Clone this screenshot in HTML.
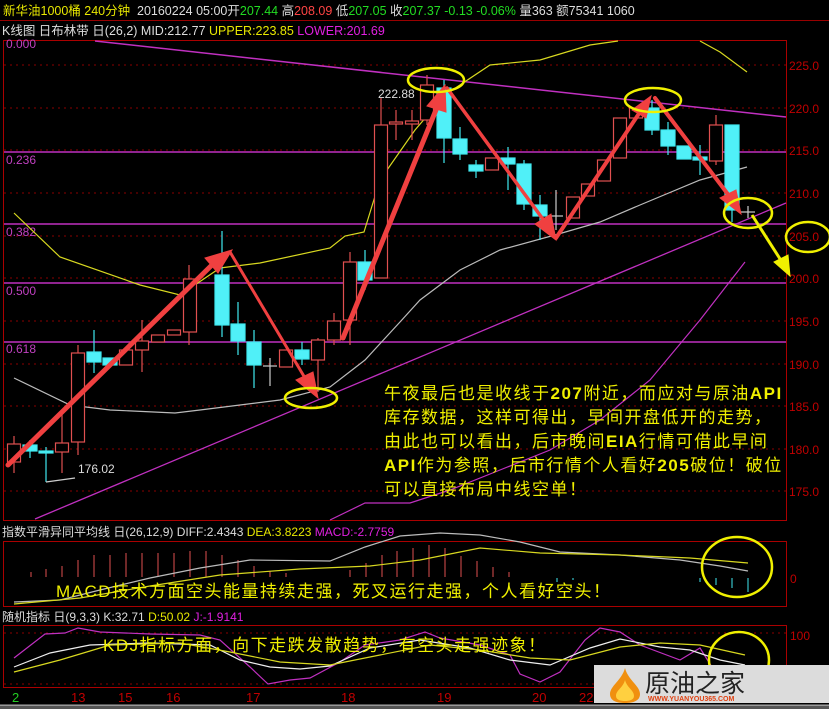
<!DOCTYPE html>
<html><head><meta charset="utf-8"><style>
html,body{margin:0;padding:0;background:#000;width:829px;height:709px;overflow:hidden}
svg{display:block}
text{font-family:"Liberation Sans","Noto Sans CJK SC",sans-serif}
</style></head><body>
<svg width="829" height="709" viewBox="0 0 829 709" xmlns="http://www.w3.org/2000/svg">
<rect width="829" height="709" fill="#000"/>
<!-- header -->
<text x="3" y="15" font-size="12.5" fill="#e8e800">新华油1000桶 240分钟</text>
<text x="137" y="15" font-size="12.5" fill="#ddd">20160224 05:00开<tspan fill="#22dd22">207.44</tspan> 高<tspan fill="#ff4444">208.09</tspan> 低<tspan fill="#22dd22">207.05</tspan> 收<tspan fill="#22dd22">207.37</tspan> <tspan fill="#22dd22">-0.13</tspan> <tspan fill="#22dd22">-0.06%</tspan> 量363 额75341 1060</text>
<line x1="0" y1="20.5" x2="829" y2="20.5" stroke="#900"/>
<text x="2" y="35" font-size="12.5" fill="#ddd">K线图 日布林带 日(26,2) MID:212.77 <tspan fill="#e8e800">UPPER:223.85</tspan> <tspan fill="#e020e0">LOWER:201.69</tspan></text>
<!-- main frame -->
<rect x="3.5" y="40.5" width="783" height="480" fill="none" stroke="#a00"/>
<g stroke="#8a0000" stroke-dasharray="2,4">
<line x1="4" y1="65" x2="786" y2="65"/><line x1="4" y1="108" x2="786" y2="108"/><line x1="4" y1="150" x2="786" y2="150"/><line x1="4" y1="193" x2="786" y2="193"/><line x1="4" y1="236" x2="786" y2="236"/><line x1="4" y1="278" x2="786" y2="278"/><line x1="4" y1="321" x2="786" y2="321"/><line x1="4" y1="364" x2="786" y2="364"/><line x1="4" y1="406" x2="786" y2="406"/><line x1="4" y1="449" x2="786" y2="449"/><line x1="4" y1="491" x2="786" y2="491"/>
</g>
<g stroke="#c030c0" stroke-width="1.5">
<line x1="4" y1="152" x2="786" y2="152"/><line x1="4" y1="224" x2="786" y2="224"/><line x1="4" y1="283" x2="786" y2="283"/><line x1="4" y1="342" x2="786" y2="342"/>
</g>
<g font-size="12" fill="#c040c0"><text x="6" y="48">0.000</text><text x="6" y="164">0.236</text><text x="6" y="236">0.382</text><text x="6" y="295">0.500</text><text x="6" y="353">0.618</text></g>
<g font-size="12" fill="#c00000"><text x="789" y="70">225.0</text><text x="789" y="113">220.0</text><text x="789" y="155">215.0</text><text x="789" y="198">210.0</text><text x="789" y="241">205.0</text><text x="789" y="283">200.0</text><text x="789" y="326">195.0</text><text x="789" y="369">190.0</text><text x="789" y="411">185.0</text><text x="789" y="454">180.0</text><text x="789" y="496">175.0</text></g>
<!-- trend lines -->
<line x1="95" y1="41" x2="786" y2="117" stroke="#c030c0" stroke-width="1.5"/>
<line x1="35" y1="519" x2="786" y2="203" stroke="#c030c0" stroke-width="1.3"/>
<polyline fill="none" stroke="#c030c0" stroke-width="1.2" points="330,520 365,503 410,503 450,490 500,470 550,450 600,420 650,380 700,320 745,262"/>
<polyline fill="none" stroke="#d8d820" stroke-width="1.2" points="14,213 60,257 140,285 180,295 220,268 260,263 330,248 345,236 364,232 380,180 415,130 445,95 490,65 540,60 590,45 618,41"/>
<polyline fill="none" stroke="#d8d820" stroke-width="1.2" points="700,41 720,52 747,72"/>
<polyline fill="none" stroke="#bbb" stroke-width="1.2" points="14,378 70,405 110,410 175,413 200,410 280,400 330,387 365,360 400,322 420,300 460,270 500,250 555,235 600,222 640,205 700,180 747,167"/>
<!-- candles -->
<g stroke="#e05050" fill="#000" stroke-width="1.2">
<line x1="14" y1="436" x2="14" y2="473"/><rect x="7.5" y="444" width="13" height="18"/>
<line x1="62" y1="415" x2="62" y2="473"/><rect x="55.5" y="443" width="13" height="9"/>
<line x1="78" y1="345" x2="78" y2="455"/><rect x="71.5" y="353" width="13" height="89"/>
<rect x="119.5" y="350" width="13" height="15"/>
<line x1="142" y1="320" x2="142" y2="372"/><rect x="135.5" y="341" width="13" height="9"/>
<rect x="151.5" y="335" width="13" height="7"/>
<rect x="167.5" y="330" width="13" height="5"/>
<line x1="189" y1="265" x2="189" y2="345"/><rect x="183.5" y="279" width="13" height="53"/>
<rect x="279.5" y="350" width="13" height="17"/>
<line x1="318" y1="338" x2="318" y2="392"/><rect x="311.5" y="340" width="13" height="20"/>
<line x1="334" y1="313" x2="334" y2="345"/><rect x="327.5" y="321" width="13" height="19"/>
<line x1="350" y1="252" x2="350" y2="345"/><rect x="343.5" y="262" width="13" height="58"/>
<line x1="381" y1="98" x2="381" y2="278"/><rect x="374.5" y="125" width="13" height="153"/>
<line x1="396" y1="110" x2="396" y2="140"/><rect x="389.5" y="122" width="13" height="2"/>
<line x1="412" y1="110" x2="412" y2="140"/><rect x="405.5" y="121" width="13" height="3"/>
<line x1="427" y1="75" x2="427" y2="125"/><rect x="420.5" y="85" width="13" height="35"/>
<rect x="485.5" y="158" width="13" height="12"/>
<rect x="566.5" y="197" width="13" height="21"/>
<rect x="581.5" y="184" width="13" height="12"/>
<rect x="597.5" y="160" width="13" height="21"/>
<rect x="613.5" y="118" width="13" height="40"/>
<rect x="629.5" y="108" width="13" height="10"/>
<line x1="716" y1="115" x2="716" y2="165"/><rect x="709.5" y="125" width="13" height="36"/>
</g>
<g stroke="#40e8f0" fill="#50f0f8" stroke-width="1.2">
<line x1="30" y1="440" x2="30" y2="458"/><rect x="23" y="445" width="14" height="6"/>
<line x1="46" y1="447" x2="46" y2="482"/><rect x="39" y="451" width="14" height="2"/>
<line x1="94" y1="330" x2="94" y2="373"/><rect x="87" y="352" width="14" height="10"/>
<rect x="103" y="358" width="14" height="7"/>
<line x1="222" y1="231" x2="222" y2="337"/><rect x="215" y="275" width="14" height="50"/>
<line x1="238" y1="302" x2="238" y2="355"/><rect x="231" y="324" width="14" height="17"/>
<line x1="254" y1="330" x2="254" y2="388"/><rect x="247" y="342" width="14" height="23"/>
<line x1="302" y1="342" x2="302" y2="365"/><rect x="295" y="350" width="14" height="9"/>
<line x1="365" y1="250" x2="365" y2="290"/><rect x="358" y="262" width="14" height="18"/>
<line x1="444" y1="80" x2="444" y2="163"/><rect x="437" y="88" width="14" height="50"/>
<line x1="460" y1="127" x2="460" y2="160"/><rect x="453" y="139" width="14" height="15"/>
<line x1="476" y1="160" x2="476" y2="178"/><rect x="469" y="165" width="14" height="6"/>
<line x1="508" y1="147" x2="508" y2="190"/><rect x="501" y="158" width="14" height="6"/>
<line x1="524" y1="160" x2="524" y2="210"/><rect x="517" y="164" width="14" height="40"/>
<line x1="540" y1="195" x2="540" y2="240"/><rect x="533" y="205" width="14" height="11"/>
<line x1="652" y1="100" x2="652" y2="135"/><rect x="645" y="108" width="14" height="22"/>
<line x1="668" y1="122" x2="668" y2="155"/><rect x="661" y="130" width="14" height="16"/>
<rect x="677" y="146" width="14" height="13"/>
<line x1="700" y1="145" x2="700" y2="175"/><rect x="693" y="157" width="14" height="3"/>
<line x1="732" y1="125" x2="732" y2="222"/><rect x="725" y="125" width="14" height="85"/>
</g>
<g stroke="#ccc" stroke-width="1.2">
<line x1="263" y1="366" x2="277" y2="366"/><line x1="270" y1="358" x2="270" y2="386"/>
<line x1="549" y1="216" x2="563" y2="216"/><line x1="556" y1="190" x2="556" y2="230"/>
<line x1="741" y1="212" x2="755" y2="212"/><line x1="748" y1="206" x2="748" y2="218"/>
<polyline fill="none" points="46,482 75,478"/>
</g>
<text x="78" y="473" font-size="12" fill="#ddd">176.02</text>
<text x="378" y="98" font-size="12" fill="#ddd">222.88</text>
<!-- arrows -->
<g stroke="#f04040" fill="#f04040" stroke-linecap="round">
<line x1="8" y1="465" x2="215" y2="262" stroke-width="5"/><polygon points="232,250 205,258 218,273"/>
<line x1="230" y1="252" x2="305" y2="378" stroke-width="3"/><polygon points="318,398 296,380 313,372"/>
<line x1="343" y1="338" x2="438" y2="105" stroke-width="5"/><polygon points="445,85 427,106 446,112"/>
<line x1="447" y1="88" x2="545" y2="222" stroke-width="3.5"/><polygon points="556,240 535,224 551,214"/>
<line x1="556" y1="238" x2="640" y2="112" stroke-width="4"/><polygon points="651,96 632,110 646,118"/>
<line x1="655" y1="98" x2="730" y2="197" stroke-width="4"/><polygon points="741,214 720,198 736,190"/>
</g>
<g stroke="#f0f000" fill="#f0f000">
<line x1="752" y1="215" x2="782" y2="262" stroke-width="3"/><polygon points="790,276 774,262 788,255"/>
</g>
<g fill="none" stroke="#f0f000" stroke-width="2.5">
<ellipse cx="436" cy="80" rx="28" ry="12"/><ellipse cx="311" cy="398" rx="26" ry="10"/><ellipse cx="653" cy="100" rx="28" ry="12"/><ellipse cx="748" cy="213" rx="24" ry="15"/><ellipse cx="808" cy="237" rx="22" ry="15"/>
</g>
<g font-size="17" fill="#f0f000" letter-spacing="1.5">
<text x="384" y="399">午夜最后也是收线于<tspan font-weight="bold">207</tspan>附近，而应对与原油<tspan font-weight="bold">API</tspan></text>
<text x="384" y="423">库存数据，这样可得出，早间开盘低开的走势，</text>
<text x="384" y="447">由此也可以看出，后市晚间<tspan font-weight="bold">EIA</tspan>行情可借此早间</text>
<text x="384" y="471"><tspan font-weight="bold">API</tspan>作为参照，后市行情个人看好<tspan font-weight="bold">205</tspan>破位！破位</text>
<text x="384" y="495">可以直接布局中线空单！</text>
</g>
<!-- MACD -->
<text x="2" y="536" font-size="12" fill="#ddd">指数平滑异同平均线 日(26,12,9) DIFF:2.4343 <tspan fill="#e8e800">DEA:3.8223</tspan> <tspan fill="#e020e0">MACD:-2.7759</tspan></text>
<rect x="3.5" y="541.5" width="783" height="65" fill="none" stroke="#a00"/>
<text x="790" y="583" font-size="12" fill="#c00000">0</text>
<g stroke="#e05050" stroke-width="1">
<line x1="31" y1="577" x2="31" y2="572"/><line x1="46" y1="577" x2="46" y2="569"/><line x1="62" y1="577" x2="62" y2="566"/><line x1="78" y1="577" x2="78" y2="560"/><line x1="94" y1="577" x2="94" y2="555"/><line x1="110" y1="577" x2="110" y2="555"/><line x1="126" y1="577" x2="126" y2="553"/><line x1="142" y1="577" x2="142" y2="553"/><line x1="158" y1="577" x2="158" y2="553"/><line x1="174" y1="577" x2="174" y2="553"/><line x1="190" y1="577" x2="190" y2="551"/><line x1="206" y1="577" x2="206" y2="551"/><line x1="222" y1="577" x2="222" y2="555"/><line x1="238" y1="577" x2="238" y2="560"/><line x1="254" y1="577" x2="254" y2="566"/><line x1="270" y1="577" x2="270" y2="571"/><line x1="286" y1="577" x2="286" y2="573"/>
<line x1="350" y1="577" x2="350" y2="570"/><line x1="366" y1="577" x2="366" y2="563"/><line x1="382" y1="577" x2="382" y2="555"/><line x1="397" y1="577" x2="397" y2="551"/><line x1="413" y1="577" x2="413" y2="548"/><line x1="429" y1="577" x2="429" y2="545"/><line x1="445" y1="577" x2="445" y2="548"/><line x1="461" y1="577" x2="461" y2="556"/><line x1="477" y1="577" x2="477" y2="561"/><line x1="493" y1="577" x2="493" y2="567"/><line x1="509" y1="577" x2="509" y2="572"/>
</g>
<g stroke="#40e8f0" stroke-width="1">
<line x1="557" y1="578" x2="557" y2="582"/><line x1="573" y1="578" x2="573" y2="580"/><line x1="700" y1="578" x2="700" y2="582"/><line x1="716" y1="578" x2="716" y2="585"/><line x1="732" y1="578" x2="732" y2="588"/><line x1="748" y1="578" x2="748" y2="592"/>
</g>
<polyline fill="none" stroke="#bbb" stroke-width="1.2" points="14,602 60,600 100,590 150,578 200,568 250,560 330,561 365,547 400,536 440,533 480,535 520,542 560,552 620,555 680,560 720,566 748,571"/>
<polyline fill="none" stroke="#d8d820" stroke-width="1.2" points="14,604 80,598 150,586 220,575 300,569 370,566 420,560 480,548 540,553 620,555 690,558 748,563"/>
<text x="56" y="597" font-size="17" letter-spacing="1.5" fill="#f0f000">MACD技术方面空头能量持续走强，死叉运行走强，个人看好空头！</text>
<ellipse cx="737" cy="567" rx="35" ry="30" fill="none" stroke="#f0f000" stroke-width="2.5"/>
<!-- KDJ -->
<text x="2" y="621" font-size="12" fill="#ddd">随机指标 日(9,3,3) K:32.71 <tspan fill="#e8e800">D:50.02</tspan> <tspan fill="#e020e0">J:-1.9141</tspan></text>
<rect x="3.5" y="625.5" width="783" height="62" fill="none" stroke="#a00"/>
<line x1="4" y1="633" x2="786" y2="633" stroke="#8a0000" stroke-dasharray="2,4"/>
<line x1="4" y1="684" x2="786" y2="684" stroke="#8a0000" stroke-dasharray="2,4"/>
<text x="790" y="640" font-size="12" fill="#c00000">100</text>
<polyline fill="none" stroke="#c030c0" stroke-width="1.2" points="14,658 45,634 65,633 78,628 100,632 150,634 200,635 220,640 250,667 268,684 290,680 310,678 340,662 365,645 400,640 425,632 440,638 480,645 510,655 520,674 540,682 560,672 585,640 600,628 620,632 640,645 680,660 700,648 720,680"/>
<polyline fill="none" stroke="#eee" stroke-width="1.2" points="14,667 50,653 90,645 150,643 210,645 240,660 270,667 300,669 330,666 370,648 420,640 470,648 510,660 550,665 590,648 620,639 660,647 690,650 720,660 745,665"/>
<polyline fill="none" stroke="#d8d820" stroke-width="1.2" points="14,672 60,660 110,645 180,643 230,652 280,662 330,665 380,655 430,645 480,650 530,658 570,660 620,647 660,643 700,645 745,655"/>
<text x="103" y="651" font-size="17" letter-spacing="1.5" fill="#f0f000">KDJ指标方面，向下走跌发散趋势，有空头走强迹象！</text>
<ellipse cx="739" cy="660" rx="30" ry="28" fill="none" stroke="#f0f000" stroke-width="2.5"/>
<!-- x axis -->
<g font-size="13" fill="#c00000"><text x="12" y="702" fill="#22cc22">2</text><text x="71" y="702">13</text><text x="118" y="702">15</text><text x="166" y="702">16</text><text x="246" y="702">17</text><text x="341" y="702">18</text><text x="437" y="702">19</text><text x="532" y="702">20</text><text x="579" y="702">22</text></g>
<rect x="0" y="704" width="829" height="5" fill="#555"/>
<rect x="0" y="705" width="829" height="1" fill="#999"/>
<!-- logo -->
<rect x="594" y="665" width="235" height="38" fill="#dcdcdc"/>
<path d="M625 668 C628 680 640 686 640 694 C640 701 633 703 625 703 C617 703 610 701 610 694 C610 686 622 680 625 668Z" fill="#f09010"/>
<path d="M625 680 C627 688 634 690 634 696 C634 700 629 701 625 701 C621 701 616 700 616 696 C616 690 623 688 625 680Z" fill="#ffd040"/>
<text x="645" y="692" font-size="25" fill="#222" font-family="Noto Sans CJK SC,sans-serif">原油之家</text>
<text x="648" y="701" font-size="7" fill="#e04010" font-weight="bold">WWW.YUANYOU365.COM</text>
</svg>
</body></html>
